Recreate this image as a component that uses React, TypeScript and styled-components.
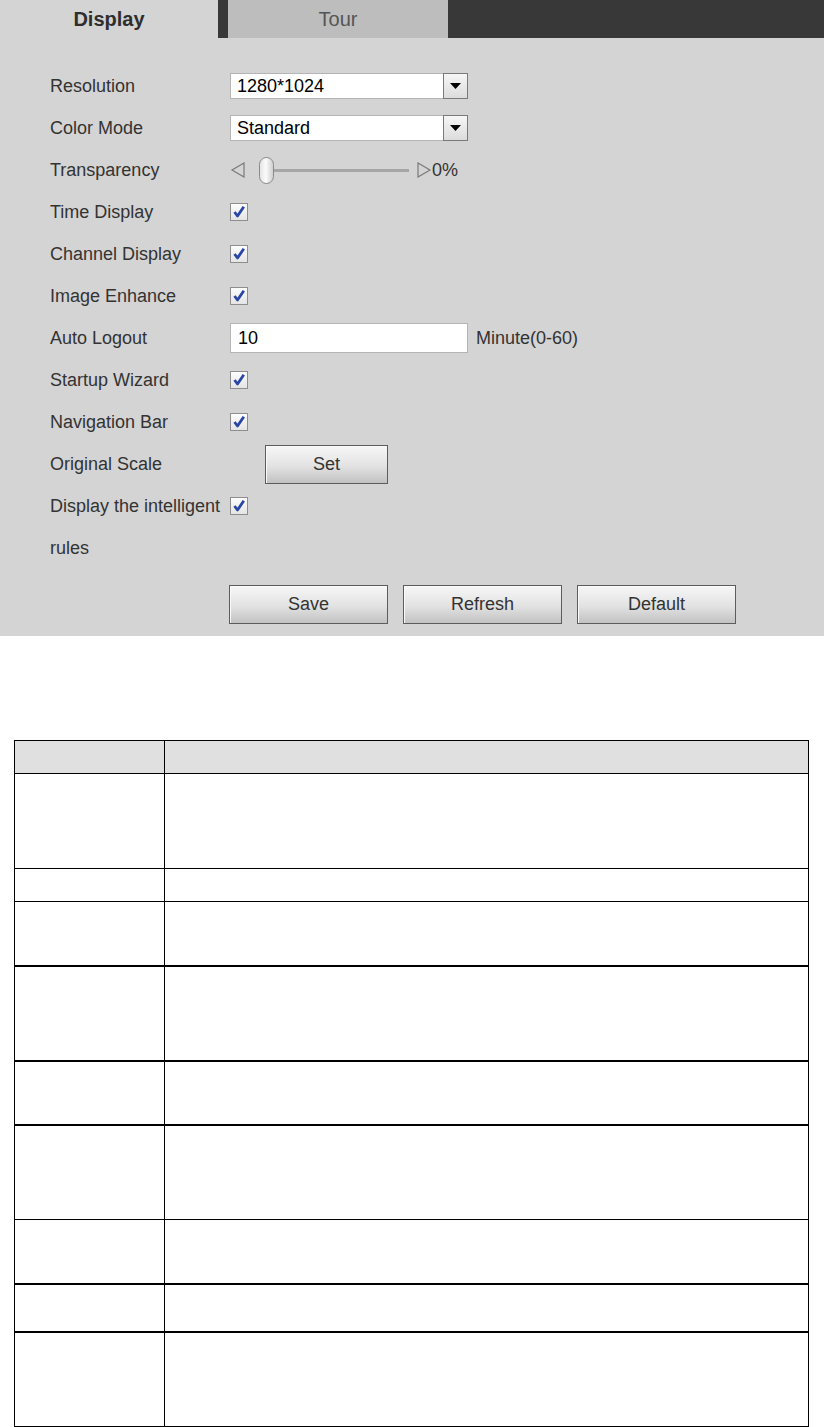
import React from 'react';
import styled, { createGlobalStyle } from 'styled-components';

const GlobalStyle = createGlobalStyle`
	html, body {
		margin: 0;
		padding: 0;
		background: #fff;
		font-family: 'Liberation Sans', Arial, sans-serif;
	}
`;

const Page = styled.div`
	width: 824px;
	height: 1427px;
	overflow: hidden;
`;

const Panel = styled.div`
	background: #d4d4d4;
	height: 636px;
`;

const TabBar = styled.div`
	display: flex;
	gap: 10px;
	height: 38px;
	background: #383838;
`;

const Tab = styled.div<{ active?: boolean; width: number }>`
	width: ${props => props.width}px;
	display: flex;
	align-items: center;
	justify-content: center;
	font-size: 20px;
	font-weight: ${props => (props.active ? 700 : 400)};
	color: ${props => (props.active ? '#2e2e2e' : '#555')};
	background: ${props => (props.active ? '#d4d4d4' : '#bdbdbd')};
`;

const Form = styled.div`
	padding: 27px 0 0 50px;
`;

const Row = styled.div`
	display: grid;
	grid-template-columns: 180px 1fr;
	align-items: start;
	min-height: 42px;
`;

const Label = styled.div`
	font-size: 18px;
	line-height: 42px;
	color: #333;
	white-space: normal;
`;

const Control = styled.div<{ indent?: number }>`
	display: flex;
	align-items: center;
	height: 42px;
	padding-left: ${props => props.indent || 0}px;
`;

const SelectBox = styled.div`
	display: flex;
	width: 238px;
	height: 26px;
	box-sizing: border-box;
	background: #fff;
	border: 1px solid #b4b4b4;
`;

const SelectValue = styled.span`
	flex: 1;
	padding-left: 6px;
	font-size: 18px;
	line-height: 24px;
	color: #000;
`;

const SelectArrow = styled.span`
	width: 25px;
	box-sizing: border-box;
	border: 1px solid #7a7a7a;
	background: linear-gradient(#f6f6f6, #dcdcdc);
	display: flex;
	align-items: center;
	justify-content: center;
	margin: -1px -1px -1px 0;
`;

const TextInput = styled.div`
	width: 238px;
	height: 30px;
	box-sizing: border-box;
	background: #fff;
	border: 1px solid #b4b4b4;
	padding-left: 7px;
	font-size: 18px;
	line-height: 28px;
	color: #000;
`;

const Unit = styled.span`
	margin-left: 8px;
	font-size: 18px;
	color: #333;
`;

const CheckBox = styled.span`
	width: 18px;
	height: 18px;
	box-sizing: border-box;
	border: 1px solid #8e8e8e;
	background: linear-gradient(#fdfdfd, #e4e4e4);
	display: flex;
	align-items: center;
	justify-content: center;
`;

const Thumb = styled.div`
	width: 15px;
	height: 27px;
	box-sizing: border-box;
	margin-left: 13px;
	border: 1px solid #8a8a8a;
	border-radius: 8px;
	background: linear-gradient(to right, #e4e4e4, #fbfbfb 45%, #cfcfcf);
`;

const Track = styled.div`
	width: 135px;
	height: 3px;
	background: #a6a6a6;
	margin-right: 7px;
`;

const SliderText = styled.span`
	font-size: 18px;
	color: #333;
`;

const ButtonRow = styled.div`
	display: flex;
	gap: 15px;
	margin: 16px 0 0 179px;
`;

const Button = styled.div<{ width: number }>`
	width: ${props => props.width}px;
	height: 39px;
	box-sizing: border-box;
	border: 1px solid #5c5c5c;
	box-shadow: inset 1px 1px 0 #fafafa;
	background: linear-gradient(#f7f7f7, #e2e2e2 55%, #c2c2c2);
	display: flex;
	align-items: center;
	justify-content: center;
	font-size: 18px;
	color: #333;
`;

const Table = styled.div`
	margin: 104px 0 0 14px;
	width: 795px;
	box-sizing: border-box;
	border-left: 1px solid #000;
	border-right: 1px solid #000;
	border-bottom: 2px solid #000;
`;

const TableRow = styled.div<{ height: number; line: number; head?: boolean }>`
	display: grid;
	grid-template-columns: 150px 1fr;
	height: ${props => props.height}px;
	box-sizing: border-box;
	border-top: ${props => props.line}px solid #000;
	background: ${props => (props.head ? '#e0e0e0' : '#fff')};
`;

const KeyCell = styled.div`
	border-right: 1px solid #000;
`;

const ValueCell = styled.div``;

const DownArrow = () => (
	<svg width="11" height="6" viewBox="0 0 11 6">
		<polygon points="0,0 11,0 5.5,6" fill="#000" />
	</svg>
);

const Check = () => (
	<svg width="14" height="14" viewBox="0 0 14 14">
		<path d="M2.5 7 L5.5 11 L11.8 1.8" fill="none" stroke="#2846a8" strokeWidth="2.8" strokeLinejoin="round" />
	</svg>
);

const Arrow = ({ dir }: { dir: 'left' | 'right' }) => (
	<svg width="16" height="16" viewBox="0 0 16 16">
		<polygon
			points={dir === 'left' ? '14,1 14,15 2,8' : '2,1 2,15 14,8'}
			fill="none"
			stroke="#7a7a7a"
			strokeWidth="1.2"
		/>
	</svg>
);

const Select: React.FC<{ value: string }> = ({ value }) => (
	<SelectBox>
		<SelectValue>{value}</SelectValue>
		<SelectArrow>
			<DownArrow />
		</SelectArrow>
	</SelectBox>
);

const Checked = () => (
	<CheckBox>
		<Check />
	</CheckBox>
);

const checkRows = ['Time Display', 'Channel Display', 'Image Enhance'];

// [row height, top line width] for the body rows of the table
const tableRows: [number, number][] = [
	[95, 1],
	[33, 1],
	[64, 1],
	[95, 2],
	[64, 2],
	[95, 2],
	[64, 1],
	[48, 2],
	[95, 2],
];

export default function App() {
	return (
		<Page>
			<GlobalStyle />
			<Panel>
				<TabBar>
					<Tab active width={218}>
						Display
					</Tab>
					<Tab width={220}>Tour</Tab>
				</TabBar>
				<Form>
					<Row>
						<Label>Resolution</Label>
						<Control>
							<Select value="1280*1024" />
						</Control>
					</Row>
					<Row>
						<Label>Color Mode</Label>
						<Control>
							<Select value="Standard" />
						</Control>
					</Row>
					<Row>
						<Label>Transparency</Label>
						<Control>
							<Arrow dir="left" />
							<Thumb />
							<Track />
							<Arrow dir="right" />
							<SliderText>0%</SliderText>
						</Control>
					</Row>
					{checkRows.map(label => (
						<Row key={label}>
							<Label>{label}</Label>
							<Control>
								<Checked />
							</Control>
						</Row>
					))}
					<Row>
						<Label>Auto Logout</Label>
						<Control>
							<TextInput>10</TextInput>
							<Unit>Minute(0-60)</Unit>
						</Control>
					</Row>
					<Row>
						<Label>Startup Wizard</Label>
						<Control>
							<Checked />
						</Control>
					</Row>
					<Row>
						<Label>Navigation Bar</Label>
						<Control>
							<Checked />
						</Control>
					</Row>
					<Row>
						<Label>Original Scale</Label>
						<Control indent={35}>
							<Button width={123}>Set</Button>
						</Control>
					</Row>
					<Row>
						<Label>Display the intelligent rules</Label>
						<Control>
							<Checked />
						</Control>
					</Row>
					<ButtonRow>
						<Button width={159}>Save</Button>
						<Button width={159}>Refresh</Button>
						<Button width={159}>Default</Button>
					</ButtonRow>
				</Form>
			</Panel>
			<Table>
				<TableRow head height={33} line={1}>
					<KeyCell />
					<ValueCell />
				</TableRow>
				{tableRows.map(([h, line], i) => (
					<TableRow key={i} height={h} line={line}>
						<KeyCell />
						<ValueCell />
					</TableRow>
				))}
			</Table>
		</Page>
	);
}
